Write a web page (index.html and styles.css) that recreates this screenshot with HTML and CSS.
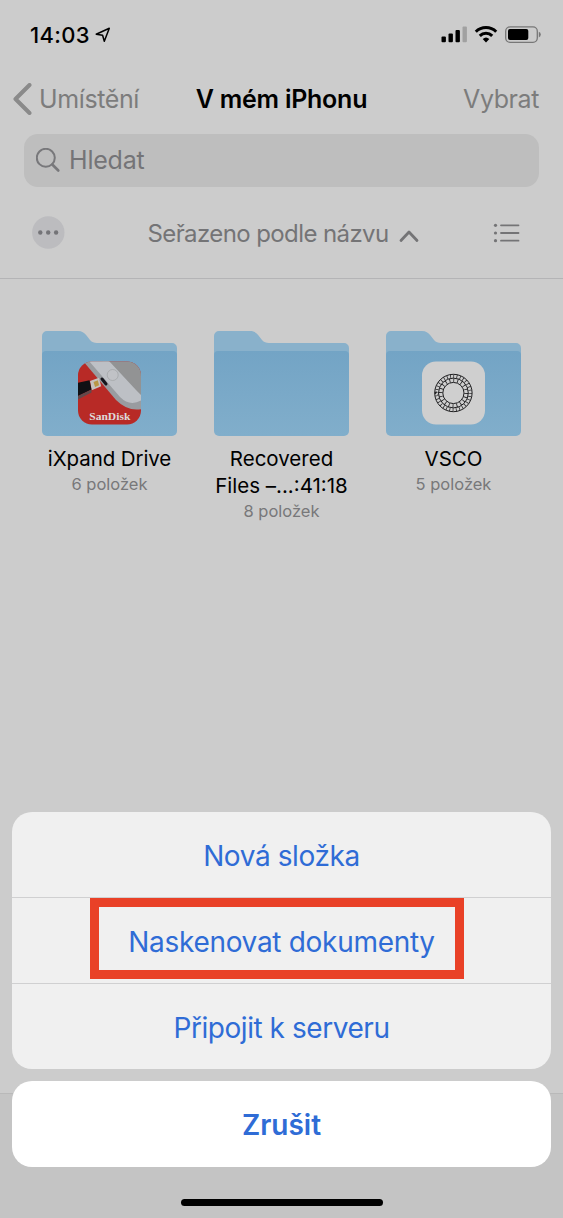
FILE: index.html
```html
<!DOCTYPE html>
<html lang="cs">
<head>
<meta charset="utf-8">
<title>V mém iPhonu</title>
<link rel="stylesheet" href="styles.css">
</head>
<body>
<svg width="0" height="0" class="defs">
  <defs>
    <linearGradient id="front" x1="0" y1="0" x2="0" y2="1">
      <stop offset="0" stop-color="#73a4c5"/><stop offset="1" stop-color="#81aecb"/>
    </linearGradient>
    <clipPath id="appclip"><rect x="36" y="30.500" width="63" height="63" rx="14"/></clipPath>
    <symbol id="folder" viewBox="0 0 135 105">
      <path fill="#89b1cb" d="M0 5a5 5 0 0 1 5-5H36c4 0 6 1.500 8.500 4.500l3.500 4.500c2 2.300 4 3 7 3H130a5 5 0 0 1 5 5V40H0Z"/>
      <path fill="url(#front)" d="M0 24a4 4 0 0 1 4-4H131a4 4 0 0 1 4 4V100a5 5 0 0 1-5 5H5a5 5 0 0 1-5-5Z"/>
    </symbol>
  </defs>
</svg>
<div class="screen">
  <header class="status">
    <div class="clock"><span class="time">14:03</span>
      <svg width="16" height="16" viewBox="0 0 16 16"><path d="M1.200 7.200 14.300 1.200 9.300 14.300 7.600 8.200Z" fill="none" stroke="#000" stroke-width="1.500" stroke-linejoin="round"/></svg>
    </div>
    <svg class="signals" width="100" height="18" viewBox="0 0 100 18">
      <rect x="0.500" y="10.500" width="4.400" height="5.800" rx="1"/><rect x="7.500" y="7.500" width="4.400" height="8.800" rx="1"/><rect x="14.500" y="4" width="4.400" height="12.300" rx="1"/><rect x="21.500" y="0.500" width="4.400" height="15.800" rx="1" fill="#a1a1a1"/>
      <g fill="none" stroke="#000" stroke-width="3"><path d="M34.800 5.800a14.500 14.500 0 0 1 20.400 0"/><path d="M38.800 9.900a8.700 8.700 0 0 1 12.400 0"/></g>
      <path d="M41.700 13a4.800 4.800 0 0 1 6.600 0L45 16.400Z"/>
      <rect x="64.700" y="0.900" width="31.600" height="15.400" rx="4.300" fill="none" stroke="#777" stroke-width="1.300"/>
      <rect x="67" y="3" width="20.300" height="11" rx="2"/><path d="M97.800 5.800q2 .6 2 2.800t-2 2.800Z" fill="#777"/>
    </svg>
  </header>
  <nav class="nav">
    <a class="back"><svg width="20" height="32" viewBox="0 0 20 32"><path d="M17.500 2 3.500 16 17.500 30" fill="none" stroke="#8a8a8a" stroke-width="4" stroke-linecap="round" stroke-linejoin="round"/></svg><span>Umístění</span></a>
    <h1>V mém iPhonu</h1>
    <a class="select">Vybrat</a>
  </nav>
  <div class="search">
    <svg width="26" height="26" viewBox="0 0 26 26" fill="none" stroke="#78787b" stroke-width="2" stroke-linecap="round"><circle cx="9.800" cy="9.800" r="9"/><path d="m16.300 16.500 6 6" stroke-width="2.600"/></svg>
    <span>Hledat</span>
  </div>
  <div class="toolbar">
    <svg width="33" height="33" viewBox="0 0 33 33"><circle cx="16.300" cy="16.500" r="16.200" fill="#bcbcbf"/><g fill="#747478"><circle cx="8.300" cy="16.500" r="2.200"/><circle cx="16.200" cy="16.500" r="2.200"/><circle cx="24.100" cy="16.500" r="2.200"/></g></svg>
    <div class="sort"><span>Seřazeno podle názvu</span><svg width="20" height="14" viewBox="0 0 20 14"><path d="M2 11.500 10 3l8 8.500" fill="none" stroke="#747476" stroke-width="2.800" stroke-linecap="round" stroke-linejoin="round"/></svg></div>
    <svg width="27" height="20" viewBox="0 0 27 20" stroke="#747476" stroke-width="1.800" stroke-linecap="round" fill="#747476"><path d="M8 2.300H25.500M8 10H25.500M8 17.700H25.500"/><g stroke="none"><circle cx="2.500" cy="2.300" r="1.600"/><circle cx="2.500" cy="10" r="1.600"/><circle cx="2.500" cy="17.700" r="1.600"/></g></svg>
  </div>
  <main class="grid">
    <article class="item">
      <svg class="folder" viewBox="0 0 135 105"><use href="#folder"/>
        <g clip-path="url(#appclip)">
          <rect x="36" y="30" width="64" height="64" fill="#b82a26"/>
          <path d="M60 30H100V71Z" fill="#929394"/>
          <path d="M41 30 74 69Q86 81 100 78V67L66 30Z" fill="#999ca0"/>
          <path d="M47 30 78 66Q88 76 100 69V65L94 59 67 30Z" fill="#bdc0c5"/>
          <circle cx="70.700" cy="44" r="5.500" fill="#c0c2c6" stroke="#a5a7aa" stroke-width=".8"/>
          <path d="m60 48 4 5" stroke="#16161d" stroke-width="3" stroke-linecap="round"/>
          <path d="m48 50 9-3.300 2.200 8.600-9.500 4Z" fill="#c6c1be"/><path d="m51.500 51 4.300-1.800 1.300 5-4 1.700Z" fill="#b99745"/>
          <path d="M36 51.700 47.500 49.300 49.500 58.500 36 65Z" fill="#101014"/><path d="M36 65 49.500 58.500V61.500L36 68.500Z" fill="#62494b"/>
          <text x="67.800" y="89" text-anchor="middle" textLength="41" lengthAdjust="spacingAndGlyphs" class="brand">SanDisk</text>
        </g>
      </svg>
      <h2 class="drive">iXpand Drive</h2><p>6 položek</p>
    </article>
    <article class="item">
      <svg class="folder" viewBox="0 0 135 105"><use href="#folder"/></svg>
      <h2>Recovered<br>Files –...:41:18</h2><p>8 položek</p>
    </article>
    <article class="item">
      <svg class="folder" viewBox="0 0 135 105"><use href="#folder"/>
        <rect x="36" y="30.500" width="63" height="63" rx="14" fill="#cfcfcf"/>
        <g fill="none" stroke="#202022" stroke-width="1">
          <circle cx="67.400" cy="62" r="18.700"/><circle cx="67.400" cy="62" r="14.900"/><circle cx="67.400" cy="62" r="10.600"/>
          <circle cx="67.400" cy="62" r="16.800" pathLength="320" stroke-width="3.600" stroke-dasharray="2.200 7.800"/>
          <circle cx="67.400" cy="62" r="12.800" pathLength="200" stroke-width="4" stroke-dasharray="2 8"/>
        </g>
      </svg>
      <h2>VSCO</h2><p>5 položek</p>
    </article>
  </main>
  <div class="tabbar"></div>
</div>
<section class="sheet">
  <div class="actions">
    <button class="new-folder">Nová složka</button>
    <button class="scan">Naskenovat dokumenty</button>
    <button class="connect">Připojit k serveru</button>
    <div class="highlight"></div>
  </div>
  <button class="cancel">Zrušit</button>
  <div class="home"></div>
</section>
</body>
</html>
```
FILE: styles.css
```css
* { box-sizing: border-box; }
body { margin: 0; background: #ccc; font-family: Inter, "Noto Sans", sans-serif; color: #000; }
.defs { position: absolute; }
svg { display: block; flex: none; }
h1, h2, p { margin: 0; font-weight: 400; }
.screen { height: 1218px; display: flex; flex-direction: column; background: #ccc; }
.status { height: 69px; padding: 0 22px 0 30px; display: flex; align-items: center; justify-content: space-between; }
.clock { display: flex; align-items: center; gap: 5px; }
.time { font-size: 22px; font-weight: 550; letter-spacing: 0.3px; }
.nav { height: 60px; padding: 0 24px 0 12px; display: grid; grid-template-columns: 150px 1fr 138px; align-items: center; white-space: nowrap; font-size: 25px; }
.back { display: flex; align-items: center; gap: 7px; color: #7c7c7c; letter-spacing: -0.38px; }
.nav h1 { font-size: 25px; font-weight: 600; text-align: center; letter-spacing: -0.25px; }
.select { color: #7c7c7c; text-align: right; letter-spacing: -0.4px; }
.search { height: 53px; margin: 5px 24px 0; padding-left: 12px; display: flex; align-items: center; gap: 7px; border-radius: 14px; background: #bebebe; color: #747477; font-size: 25px; letter-spacing: -0.2px; }
.search span { padding-bottom: 2px; }
.toolbar { height: 92px; padding: 0 43px 0 32px; display: flex; align-items: center; justify-content: space-between; border-bottom: 1px solid #b4b4b6; color: #747476; }
.sort { display: flex; align-items: center; gap: 10px; margin-left: 8px; font-size: 24px; letter-spacing: -0.6px; white-space: nowrap; }
.sort span { padding-top: 2px; }
.sort svg { margin-top: 6px; }
.grid { padding: 51.5px 42px 0; display: grid; grid-template-columns: repeat(3, 135px); gap: 37px; }
.folder { width: 135px; height: 105px; }
.item { text-align: center; white-space: nowrap; }
.item h2 { margin-top: 9px; font-size: 20.5px; line-height: 27px; }
.item .drive { letter-spacing: -0.1px; }
.item p { font-size: 16.5px; line-height: 25px; color: #78787a; }
.brand { font: bold 11px "Liberation Serif", serif; fill: #dedada; }
.tabbar { margin-top: auto; height: 125px; border-top: 1px solid #b9b9b9; background: #c4c4c4; }
.sheet { position: absolute; left: 12px; top: 812px; width: 539px; }
.actions { position: relative; height: 257px; display: grid; grid-template-rows: 85px 86px 86px; border-radius: 20px; overflow: hidden; background: #f0f0f0; }
button { width: 100%; padding: 2px 0 0; border: 0; background: none; font: 400 28px Inter, sans-serif; color: #2f6cd6; }
.actions button + button { border-top: 1px solid #d0d0d1; }
.new-folder { letter-spacing: -0.4px; }
.scan { letter-spacing: -0.3px; }
.connect { letter-spacing: -0.45px; }
.highlight { position: absolute; left: 78px; top: 86px; width: 374px; height: 81px; border: 9px solid #e94127; }
.cancel { height: 86px; margin-top: 12px; border-radius: 20px; background: #fff; font-weight: 600; }
.home { width: 202px; height: 7px; margin: 31.5px auto 0; border-radius: 4px; background: #000; }
```
